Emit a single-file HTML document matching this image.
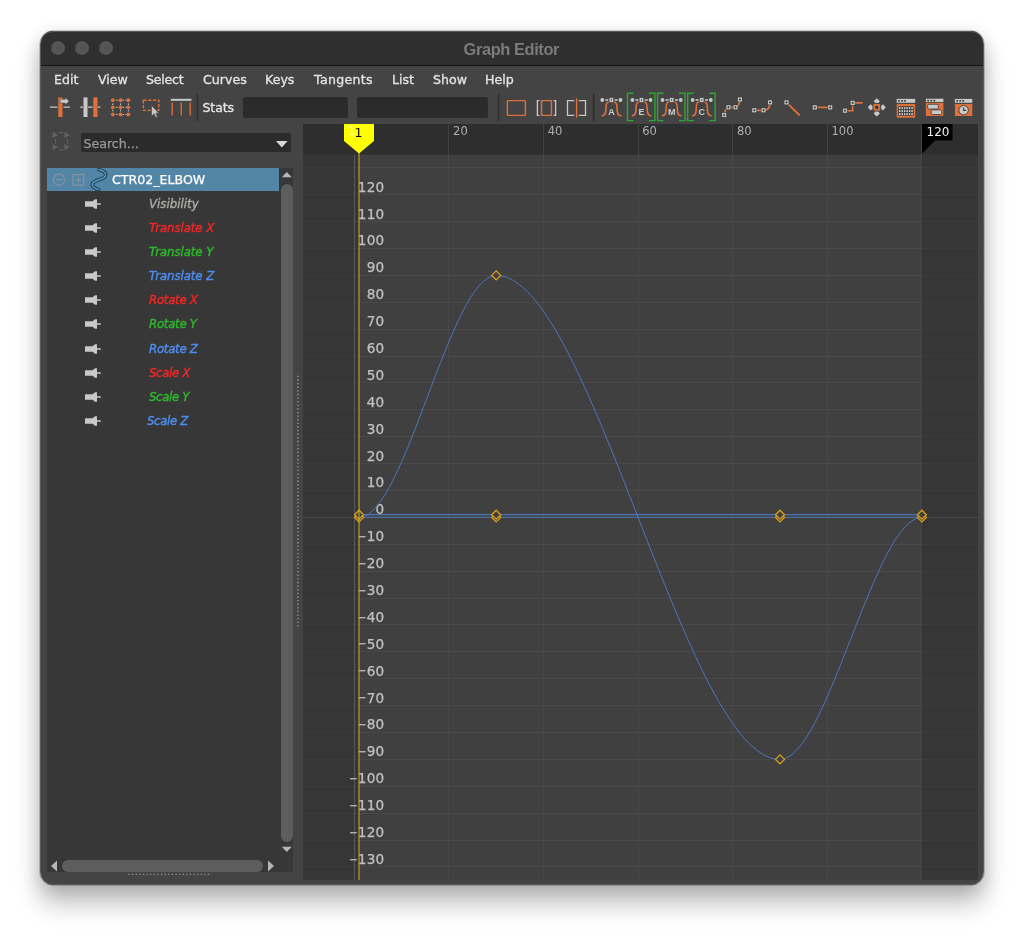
<!DOCTYPE html>
<html lang="en"><head><meta charset="utf-8"><title>Graph Editor</title>
<style>
*{box-sizing:border-box;margin:0;padding:0}
html,body{width:1024px;height:936px;overflow:hidden;background:#fff}
body{position:relative;font-family:"DejaVu Sans","Liberation Sans",sans-serif;font-size:12.4px;color:#ddd}
.win *{position:absolute}
.shadow{position:absolute;left:41px;top:31.500px;width:942px;height:853.500px;border-radius:12px;box-shadow:0 18px 26px 1px rgba(0,0,0,.24),0 4px 18px 1px rgba(0,0,0,.15)}
.win{will-change:transform;position:absolute;left:41px;top:31px;width:942px;height:854px;border-radius:12px;background:#444;overflow:hidden}
.titlebar{left:0;top:0;width:942px;height:34px;background:#2f2f2f}
.tbline{left:0;top:34px;width:942px;height:1px;background:#111}
.tl{width:14px;height:14px;border-radius:50%;background:#555;top:10px}
.title{left:0;width:942px;top:7.7px;text-align:center;font-family:"Liberation Sans",sans-serif;font-weight:bold;font-size:16.4px;color:#7b7b7b;letter-spacing:-.4px;line-height:20px;transform:translateX(-.7px)}
.menu span{-webkit-text-stroke:.3px #e4e4e4;top:38.8px;line-height:20px;color:#e4e4e4;font-size:12.6px;white-space:nowrap}
svg.graph{position:absolute;display:block}
svg text{font-family:"DejaVu Sans","Liberation Sans",sans-serif}
.rl text{font-size:11.5px;fill:#b0b0b0}
.rl120{font-size:12px;fill:#f2f2f2}
.vl text{font-size:13.6px;letter-spacing:.2px;fill:#c0c0c0;stroke:#c0c0c0;stroke-width:.25px;text-anchor:end}
.vl .mn{font-size:9.8px;letter-spacing:0;stroke-width:.4px}
.ct0{font-size:12.5px;fill:#ffffc8}
.ct1{font-size:12.5px;fill:#000}
svg.tb{position:absolute;display:block}
.tgl{font-family:"Liberation Sans",sans-serif;font-weight:bold;font-size:9px;fill:#cdcdcd;text-anchor:middle}
.stats{letter-spacing:-.15px;-webkit-text-stroke:.3px #e6e6e6;left:161.5px;top:66.5px;line-height:20px;font-size:12.6px;color:#e6e6e6}
.fld{background:#2b2b2b;border-radius:2.5px}
.search{left:40px;top:101.700px;width:210px;height:19.600px;background:#2b2b2b;border-radius:2px}
.search span{-webkit-text-stroke:.25px #9a9a9a;left:2.5px;top:1.500px;line-height:20px;font-size:12.6px;color:#9a9a9a}
.tree{left:5.700px;top:137px;width:246px;height:704px;background:#373737}
.selrow{left:5.700px;top:136.800px;width:232px;height:23.5px;background:#5285a6}
.hname{-webkit-text-stroke:.25px #fff;left:71px;top:138px;line-height:21px;font-size:12.6px;color:#fff;white-space:nowrap}
.ch{left:108px;line-height:20px;font-size:11.8px;font-style:italic;white-space:nowrap}
.vthumb{left:240.200px;top:152.500px;width:11.600px;height:658.500px;border-radius:6px;background:#5d5d5d}
.hthumb{left:21px;top:829px;width:201px;height:12px;border-radius:6px;background:#5d5d5d}
.rim{position:absolute;left:40px;top:30.600px;width:944px;height:854.600px;border-radius:13px;border:1.200px solid #5a5a5a;pointer-events:none;box-shadow:0 0 0 .5px rgba(0,0,0,.35)}

</style></head>
<body>
<div class="shadow"></div>
<div class="win">
<div class="titlebar"></div><div class="tbline"></div>
<div class="tl" style="left:10px"></div><div class="tl" style="left:34px"></div><div class="tl" style="left:58px"></div>
<div class="title">Graph Editor</div>
<div class="menu">
<span style="left:13px">Edit</span><span style="left:57px">View</span><span style="left:105px;letter-spacing:-.25px">Select</span><span style="left:162px">Curves</span><span style="left:224px">Keys</span><span style="left:273px;letter-spacing:.28px">Tangents</span><span style="left:351px">List</span><span style="left:392px">Show</span><span style="left:444px">Help</span>
</div>
<svg class="tb" style="left:0;top:57px" width="942" height="36" viewBox="41 88 942 36">
<path d="M50 107.2H57.5M63.5 107.2H70" stroke="#c8c8c8" stroke-width="1.2" fill="none"/>
<rect x="58.3" y="97.4" width="4.2" height="19.6" fill="#e0703a"/>
<path d="M60.2 99.3H65.2V97.6L69.2 101.2L65.2 104.8V103.1H60.2Z" fill="#c8c8c8" stroke="#444" stroke-width=".5"/>
<path d="M80.2 107.2H83M88 107.2H92.6M98 107.2H100.4" stroke="#c8c8c8" stroke-width="1.2" fill="none"/>
<rect x="83.5" y="97.4" width="4" height="19.6" fill="#c8c8c8"/>
<rect x="93.3" y="97.4" width="4.2" height="19.6" fill="#e0703a"/>
<g stroke="#c8c8c8" stroke-width="1" stroke-dasharray="1.6 1.6" fill="none">
<path d="M112.8 100.2V114.5"/>
<path d="M120.6 100.2V114.5"/>
<path d="M128.4 100.2V114.5"/>
<path d="M112.8 100.2H128.4"/>
<path d="M112.8 107.3H128.4"/>
<path d="M112.8 114.5H128.4"/>
</g>
<circle cx="112.8" cy="100.2" r="1.9" fill="#e0703a"/>
<circle cx="112.8" cy="107.3" r="1.9" fill="#e0703a"/>
<circle cx="112.8" cy="114.5" r="1.9" fill="#e0703a"/>
<circle cx="120.6" cy="100.2" r="1.9" fill="#e0703a"/>
<circle cx="120.6" cy="107.3" r="1.9" fill="#e0703a"/>
<circle cx="120.6" cy="114.5" r="1.9" fill="#e0703a"/>
<circle cx="128.4" cy="100.2" r="1.9" fill="#e0703a"/>
<circle cx="128.4" cy="107.3" r="1.9" fill="#e0703a"/>
<circle cx="128.4" cy="114.5" r="1.9" fill="#e0703a"/>
<rect x="143.4" y="100.2" width="15.4" height="10.2" fill="none" stroke="#e0703a" stroke-width="1.4" stroke-dasharray="3.2 1.6"/>
<path d="M151.6 105.4V116.2L154 113.8L155.8 117.6L157.4 116.8L155.7 113.2H158.8Z" fill="#c8c8c8" stroke="#444" stroke-width=".6"/>
<rect x="170.8" y="98.8" width="20.6" height="2" fill="#c8c8c8"/>
<path d="M172.2 102.4V115.4M181.2 102.4V115.4M190.2 102.4V115.4" stroke="#e0703a" stroke-width="1.3" fill="none"/>
<rect x="196.8" y="93.5" width="1.4" height="27.5" fill="#2c2c2c"/>
<rect x="497.8" y="93.5" width="1.4" height="27.5" fill="#2c2c2c"/>
<rect x="592.9" y="93.5" width="1.4" height="27.5" fill="#2c2c2c"/>
<rect x="507.4" y="100.6" width="18" height="14.8" fill="none" stroke="#e0703a" stroke-width="1.4" rx=".8"/>
<path d="M539.4 100.6H537.4V115.4H539.4M553.6 100.6H555.6V115.4H553.6" fill="none" stroke="#c8c8c8" stroke-width="1.3"/>
<rect x="541.5" y="100.6" width="10" height="14.8" fill="none" stroke="#e0703a" stroke-width="1.4" rx=".6"/>
<path d="M574.2 100.6H567.5V115.4H574.2M578.8 100.6H585.5V115.4H578.8" fill="none" stroke="#c8c8c8" stroke-width="1.3"/>
<path d="M576.6 98.3V117.7" stroke="#e0703a" stroke-width="1.4"/>
<path d="M605.3 100H608.3M614.7 100H617.7" stroke="#c8c8c8" stroke-width="1.3" fill="none"/><circle cx="602.3" cy="100" r="1.9" fill="#c8c8c8"/><circle cx="620.5" cy="100" r="1.9" fill="#c8c8c8"/><rect x="609.5" y="97.9" width="3.8" height="4.2" fill="#c8c8c8"/><rect x="610.9" y="98.9" width="1" height="2" fill="#555"/><path d="M602.3 115.8C606.1 115 605.7 112 605.9 109C606.1 105 605.9 102.6 608.0 102.3M614.8 102.3C617.1 102.600 616.9 105 617.1 109C617.3 112 616.9 115 620.7 115.8" fill="none" stroke="#e0703a" stroke-width="1.6" stroke-linecap="round"/><text x="611.5" y="115.2" class="tgl">A</text>
<path d="M633.5 93.3H627.5V120.6H633.5M648.9 93.3H654.9V120.6H648.9" fill="none" stroke="#2fa62f" stroke-width="1.4"/><path d="M635.4 100H638.4M644.8 100H647.8" stroke="#c8c8c8" stroke-width="1.3" fill="none"/><circle cx="632.4" cy="100" r="1.9" fill="#c8c8c8"/><circle cx="650.6" cy="100" r="1.9" fill="#c8c8c8"/><rect x="639.6" y="97.9" width="3.8" height="4.2" fill="#c8c8c8"/><rect x="641.0" y="98.9" width="1" height="2" fill="#555"/><path d="M632.4 115.8C636.2 115 635.8 112 636.0 109C636.2 105 636.0 102.6 638.1 102.3M644.9 102.3C647.2 102.600 647.0 105 647.2 109C647.4 112 647.0 115 650.8 115.8" fill="none" stroke="#e0703a" stroke-width="1.6" stroke-linecap="round"/><text x="641.6" y="115.2" class="tgl">E</text>
<path d="M663.6 93.3H657.6V120.6H663.6M679.0 93.3H685.0V120.6H679.0" fill="none" stroke="#2fa62f" stroke-width="1.4"/><path d="M665.5 100H668.5M674.9 100H677.9" stroke="#c8c8c8" stroke-width="1.3" fill="none"/><circle cx="662.5" cy="100" r="1.9" fill="#c8c8c8"/><circle cx="680.7" cy="100" r="1.9" fill="#c8c8c8"/><rect x="669.7" y="97.9" width="3.8" height="4.2" fill="#c8c8c8"/><rect x="671.1" y="98.9" width="1" height="2" fill="#555"/><path d="M662.5 115.8C666.3 115 665.9 112 666.1 109C666.3 105 666.1 102.6 668.2 102.3M675.0 102.3C677.3 102.600 677.1 105 677.3 109C677.5 112 677.1 115 680.9 115.8" fill="none" stroke="#e0703a" stroke-width="1.6" stroke-linecap="round"/><text x="671.7" y="115.2" class="tgl">M</text>
<path d="M693.7 93.3H687.7V120.6H693.7M709.1 93.3H715.1V120.6H709.1" fill="none" stroke="#2fa62f" stroke-width="1.4"/><path d="M695.6 100H698.6M705.0 100H708.0" stroke="#c8c8c8" stroke-width="1.3" fill="none"/><circle cx="692.6" cy="100" r="1.9" fill="#c8c8c8"/><circle cx="710.8" cy="100" r="1.9" fill="#c8c8c8"/><rect x="699.8" y="97.9" width="3.8" height="4.2" fill="#c8c8c8"/><rect x="701.2" y="98.9" width="1" height="2" fill="#555"/><path d="M692.6 115.8C696.4 115 696.0 112 696.2 109C696.4 105 696.2 102.6 698.3 102.3M705.1 102.3C707.4 102.600 707.2 105 707.4 109C707.6 112 707.2 115 711.0 115.8" fill="none" stroke="#e0703a" stroke-width="1.6" stroke-linecap="round"/><text x="701.8" y="115.2" class="tgl">C</text>
<path d="M724.3 115.1C724.800 110.500 726 108.500 728.400 107.300H735.600C738.400 106.600 739.600 103.600 740 99.400" fill="none" stroke="#e0703a" stroke-width="1.8"/>
<rect x="722.1" y="112.9" width="4.2" height="4.2" fill="#c8c8c8" stroke="#383838" stroke-width="1.1" paint-order="stroke"/><path d="M723.1 115.0H725.3M724.2 113.9V116.1" stroke="#333" stroke-width=".9" fill="none"/>
<rect x="726.4" y="105.2" width="4.2" height="4.2" fill="#c8c8c8" stroke="#383838" stroke-width="1.1" paint-order="stroke"/><path d="M727.4 107.3H729.6M728.5 106.2V108.4" stroke="#333" stroke-width=".9" fill="none"/>
<rect x="733.4" y="105.2" width="4.2" height="4.2" fill="#c8c8c8" stroke="#383838" stroke-width="1.1" paint-order="stroke"/><path d="M734.4 107.3H736.6M735.5 106.2V108.4" stroke="#333" stroke-width=".9" fill="none"/>
<rect x="737.8" y="97.4" width="4.2" height="4.2" fill="#c8c8c8" stroke="#383838" stroke-width="1.1" paint-order="stroke"/><path d="M738.8 99.5H741.0M739.9 98.4V100.6" stroke="#333" stroke-width=".9" fill="none"/>
<path d="M754.3 110.3H763.5C768 110.3 770 107.6 770 102.4" fill="none" stroke="#e0703a" stroke-width="1.8"/>
<rect x="752.2" y="108.2" width="4.2" height="4.2" fill="#c8c8c8" stroke="#383838" stroke-width="1.1" paint-order="stroke"/><path d="M753.2 110.3H755.4M754.3 109.2V111.4" stroke="#333" stroke-width=".9" fill="none"/>
<rect x="761.4" y="108.2" width="4.2" height="4.2" fill="#c8c8c8" stroke="#383838" stroke-width="1.1" paint-order="stroke"/><path d="M762.4 110.3H764.6M763.5 109.2V111.4" stroke="#333" stroke-width=".9" fill="none"/>
<rect x="767.9" y="100.3" width="4.2" height="4.2" fill="#c8c8c8" stroke="#383838" stroke-width="1.1" paint-order="stroke"/><path d="M768.9 102.4H771.1M770.0 101.3V103.5" stroke="#333" stroke-width=".9" fill="none"/>
<path d="M786.5 102.4L799.7 115.5" fill="none" stroke="#e0703a" stroke-width="1.8"/>
<rect x="784.4" y="100.3" width="4.2" height="4.2" fill="#c8c8c8" stroke="#383838" stroke-width="1.1" paint-order="stroke"/><path d="M785.4 102.4H787.6M786.5 101.3V103.5" stroke="#333" stroke-width=".9" fill="none"/>
<path d="M814.8 107.4H830.2" fill="none" stroke="#e0703a" stroke-width="1.6"/>
<rect x="812.7" y="105.3" width="4.2" height="4.2" fill="#c8c8c8" stroke="#383838" stroke-width="1.1" paint-order="stroke"/><path d="M813.7 107.4H815.9M814.8 106.3V108.5" stroke="#333" stroke-width=".9" fill="none"/>
<rect x="828.1" y="105.3" width="4.2" height="4.2" fill="#c8c8c8" stroke="#383838" stroke-width="1.1" paint-order="stroke"/><path d="M829.1 107.4H831.3M830.2 106.3V108.5" stroke="#333" stroke-width=".9" fill="none"/>
<path d="M845 110.7H852.7V102.9H862.6" fill="none" stroke="#e0703a" stroke-width="1.6"/>
<rect x="842.9" y="108.6" width="4.2" height="4.2" fill="#c8c8c8" stroke="#383838" stroke-width="1.1" paint-order="stroke"/><path d="M843.9 110.7H846.1M845.0 109.6V111.8" stroke="#333" stroke-width=".9" fill="none"/>
<rect x="850.6" y="100.8" width="4.2" height="4.2" fill="#c8c8c8" stroke="#383838" stroke-width="1.1" paint-order="stroke"/><path d="M851.6 102.9H853.8M852.7 101.8V104.0" stroke="#333" stroke-width=".9" fill="none"/>
<rect x="874.4" y="104.89999999999999" width="4.8" height="4.8" fill="#333" stroke="#e0703a" stroke-width="1.8"/>
<path d="M885.9 107.3L882.9 110.4L881.1 108.7L881.1 105.9L882.9 104.2ZM867.7 107.3L870.7 104.2L872.5 105.9L872.5 108.7L870.7 110.4ZM876.8 116.4L873.7 113.4L875.4 111.6L878.2 111.6L879.9 113.4ZM876.8 98.2L879.9 101.2L878.2 103.0L875.4 103.0L873.7 101.2Z" fill="#c8c8c8"/>
<rect x="896.7" y="98.9" width="18.5" height="3.9" fill="#c8c8c8"/><rect x="898.10" y="100.0" width="1.7" height="1.7" fill="#3c3c3c"/><rect x="901.15" y="100.0" width="1.7" height="1.7" fill="#3c3c3c"/><rect x="904.20" y="100.0" width="1.7" height="1.7" fill="#3c3c3c"/>
<rect x="896.7" y="104" width="18.5" height="13.8" rx="1" fill="#e0703a"/>
<rect x="898.2" y="106.3" width="15.4" height="9.5" rx=".6" fill="#3a3a3a"/>
<rect x="899.00" y="107.1" width="1.5" height="2" fill="#c8c8c8"/>
<rect x="901.46" y="107.1" width="1.5" height="2" fill="#c8c8c8"/>
<rect x="903.92" y="107.1" width="1.5" height="2" fill="#c8c8c8"/>
<rect x="906.38" y="107.1" width="1.5" height="2" fill="#c8c8c8"/>
<rect x="908.84" y="107.1" width="1.5" height="2" fill="#c8c8c8"/>
<rect x="911.30" y="107.1" width="1.5" height="2" fill="#c8c8c8"/>
<rect x="899.00" y="110.1" width="1.5" height="2" fill="#c8c8c8"/>
<rect x="901.46" y="110.1" width="1.5" height="2" fill="#c8c8c8"/>
<rect x="903.92" y="110.1" width="1.5" height="2" fill="#c8c8c8"/>
<rect x="906.38" y="110.1" width="1.5" height="2" fill="#c8c8c8"/>
<rect x="908.84" y="110.1" width="1.5" height="2" fill="#c8c8c8"/>
<rect x="911.30" y="110.1" width="1.5" height="2" fill="#c8c8c8"/>
<rect x="899.00" y="113.1" width="1.5" height="2" fill="#c8c8c8"/>
<rect x="901.46" y="113.1" width="1.5" height="2" fill="#c8c8c8"/>
<rect x="903.92" y="113.1" width="1.5" height="2" fill="#c8c8c8"/>
<rect x="906.38" y="113.1" width="1.5" height="2" fill="#c8c8c8"/>
<rect x="908.84" y="113.1" width="1.5" height="2" fill="#c8c8c8"/>
<rect x="911.30" y="113.1" width="1.5" height="2" fill="#c8c8c8"/>
<rect x="925.9" y="98.7" width="17.5" height="3.3" fill="#c8c8c8"/><rect x="927.30" y="99.8" width="1.7" height="1.7" fill="#3c3c3c"/><rect x="930.35" y="99.8" width="1.7" height="1.7" fill="#3c3c3c"/><rect x="933.40" y="99.8" width="1.7" height="1.7" fill="#3c3c3c"/>
<rect x="925.9" y="102.8" width="17.5" height="13.2" fill="#e0703a"/>
<rect x="927.6" y="104.3" width="10.7" height="4.7" rx="1.2" fill="#c8c8c8" stroke="#3a3a3a" stroke-width=".8"/><rect x="931.2" y="109.9" width="10.6" height="4.7" rx="1.2" fill="#c8c8c8" stroke="#3a3a3a" stroke-width=".8"/>
<rect x="954.9" y="98.9" width="17.4" height="3.9" fill="#c8c8c8"/><rect x="956.30" y="100.0" width="1.7" height="1.7" fill="#3c3c3c"/><rect x="959.35" y="100.0" width="1.7" height="1.7" fill="#3c3c3c"/><rect x="962.40" y="100.0" width="1.7" height="1.7" fill="#3c3c3c"/>
<rect x="954.9" y="104" width="17.4" height="12" fill="#e0703a"/>
<circle cx="963.6" cy="110.2" r="4.7" fill="#c8c8c8" stroke="#3a3a3a" stroke-width=".9"/><path d="M963.6 107.4V110.4H966" fill="none" stroke="#3a3a3a" stroke-width="1.1"/>
</svg>
<div class="stats">Stats</div>
<div class="fld" style="left:202px;top:66px;width:105px;height:21px"></div>
<div class="fld" style="left:315.5px;top:66px;width:131.5px;height:21px"></div>
<svg style="left:11px;top:100px" width="20" height="22" viewBox="52 131 20 22"><g fill="none" stroke="#616161" stroke-width="1.200"><path d="M59 132.700H63.500M59 150H63.500M55.500 139V143.500M67.500 139V143.500"/></g><path d="M52.600 131.800l5.600 3.100-5.600 3.100zM64.400 131.800l5.600 3.100-5.600 3.100zM52.600 144l5.600 3.100-5.600 3.100zM64.400 144l5.600 3.100-5.600 3.100z" fill="#616161"/></svg>
<div class="search"><span>Search...</span></div>
<svg style="left:234px;top:108.600px" width="14" height="9" viewBox="0 0 14 9"><path d="M1 1H12.600L6.800 7.600Z" fill="#d8d8d8"/></svg>
<div class="tree"></div>
<div class="selrow"></div>
<svg style="left:5px;top:136px" width="64" height="26" viewBox="46 167 64 26"><circle cx="59" cy="179.700" r="5.600" fill="none" stroke="#8494a0" stroke-width="1.200"/><path d="M55.600 179.700H62.400" stroke="#8494a0" stroke-width="1.200"/><rect x="72.900" y="174.600" width="10.800" height="10.600" fill="none" stroke="#8a949c" stroke-width="1.200"/><path d="M75.200 179.900H81.400M78.300 176.800V183" stroke="#8a949c" stroke-width="1.200"/><path d="M99 169.800C103 170.500 106.200 172.400 105.600 175.600C104.800 179.600 93 180 92.300 184C91.800 186.700 95 188.500 98.600 189.600" fill="none" stroke="#2c3f4c" stroke-width="3.600" stroke-linecap="round"/><path d="M99 169.800C103 170.500 106.200 172.400 105.600 175.600C104.800 179.600 93 180 92.300 184C91.800 186.700 95 188.500 98.600 189.600" fill="none" stroke="#4c9ccb" stroke-width="1.500" stroke-linecap="round"/></svg>
<div class="hname">CTR02_ELBOW</div>
<svg style="left:43px;top:166.0px" width="18" height="14" viewBox="84 -7 18 14"><path d="M85 -2.800H92.600L95 -4.800H97V-0.700H100.800V0.700H97V4.800H95L92.600 2.800H85Z" fill="#c8c8c8"/></svg>
<div class="ch" style="top:163.0px;color:#a9ada6;-webkit-text-stroke:.38px #a9ada6;letter-spacing:0">Visibility</div>
<svg style="left:43px;top:190.1px" width="18" height="14" viewBox="84 -7 18 14"><path d="M85 -2.800H92.600L95 -4.800H97V-0.700H100.800V0.700H97V4.800H95L92.600 2.800H85Z" fill="#c8c8c8"/></svg>
<div class="ch" style="top:187.1px;color:#f42626;-webkit-text-stroke:.38px #f42626;letter-spacing:-.1px">Translate X</div>
<svg style="left:43px;top:214.2px" width="18" height="14" viewBox="84 -7 18 14"><path d="M85 -2.800H92.600L95 -4.800H97V-0.700H100.800V0.700H97V4.800H95L92.600 2.800H85Z" fill="#c8c8c8"/></svg>
<div class="ch" style="top:211.2px;color:#2eb82e;-webkit-text-stroke:.38px #2eb82e;letter-spacing:-.1px">Translate Y</div>
<svg style="left:43px;top:238.2px" width="18" height="14" viewBox="84 -7 18 14"><path d="M85 -2.800H92.600L95 -4.800H97V-0.700H100.800V0.700H97V4.800H95L92.600 2.800H85Z" fill="#c8c8c8"/></svg>
<div class="ch" style="top:235.2px;color:#4d8df0;-webkit-text-stroke:.38px #4d8df0;letter-spacing:-.1px">Translate Z</div>
<svg style="left:43px;top:262.3px" width="18" height="14" viewBox="84 -7 18 14"><path d="M85 -2.800H92.600L95 -4.800H97V-0.700H100.800V0.700H97V4.800H95L92.600 2.800H85Z" fill="#c8c8c8"/></svg>
<div class="ch" style="top:259.3px;color:#f42626;-webkit-text-stroke:.38px #f42626;letter-spacing:-.3px">Rotate X</div>
<svg style="left:43px;top:286.4px" width="18" height="14" viewBox="84 -7 18 14"><path d="M85 -2.800H92.600L95 -4.800H97V-0.700H100.800V0.700H97V4.800H95L92.600 2.800H85Z" fill="#c8c8c8"/></svg>
<div class="ch" style="top:283.4px;color:#2eb82e;-webkit-text-stroke:.38px #2eb82e;letter-spacing:-.3px">Rotate Y</div>
<svg style="left:43px;top:310.5px" width="18" height="14" viewBox="84 -7 18 14"><path d="M85 -2.800H92.600L95 -4.800H97V-0.700H100.800V0.700H97V4.800H95L92.600 2.800H85Z" fill="#c8c8c8"/></svg>
<div class="ch" style="top:307.5px;color:#4d8df0;-webkit-text-stroke:.38px #4d8df0;letter-spacing:-.3px">Rotate Z</div>
<svg style="left:43px;top:334.6px" width="18" height="14" viewBox="84 -7 18 14"><path d="M85 -2.800H92.600L95 -4.800H97V-0.700H100.800V0.700H97V4.800H95L92.600 2.800H85Z" fill="#c8c8c8"/></svg>
<div class="ch" style="top:331.6px;color:#f42626;-webkit-text-stroke:.38px #f42626;letter-spacing:-.38px">Scale X</div>
<svg style="left:43px;top:358.6px" width="18" height="14" viewBox="84 -7 18 14"><path d="M85 -2.800H92.600L95 -4.800H97V-0.700H100.800V0.700H97V4.800H95L92.600 2.800H85Z" fill="#c8c8c8"/></svg>
<div class="ch" style="top:355.6px;color:#2eb82e;-webkit-text-stroke:.38px #2eb82e;letter-spacing:-.38px">Scale Y</div>
<svg style="left:43px;top:382.7px" width="18" height="14" viewBox="84 -7 18 14"><path d="M85 -2.800H92.600L95 -4.800H97V-0.700H100.800V0.700H97V4.800H95L92.600 2.800H85Z" fill="#c8c8c8"/></svg>
<div class="ch" style="top:379.7px; left:106px;color:#4d8df0;-webkit-text-stroke:.38px #4d8df0;letter-spacing:-.38px">Scale Z</div>
<svg style="left:240px;top:140px" width="14" height="8" viewBox="0 0 14 8"><path d="M.800 6.200L5.800 1.100L10.800 6.200Z" fill="#b6b6b6"/></svg>
<div class="vthumb"></div>
<svg style="left:240px;top:814px" width="14" height="8" viewBox="0 0 14 8"><path d="M.800 1.800L5.800 6.900L10.800 1.800Z" fill="#b6b6b6"/></svg>
<svg style="left:9px;top:828px" width="8" height="14" viewBox="0 0 8 14"><path d="M7 1.500L1 7L7 12.500Z" fill="#b6b6b6"/></svg>
<div class="hthumb"></div>
<svg style="left:226px;top:828px" width="8" height="14" viewBox="0 0 8 14"><path d="M1 1.500L7 7L1 12.500Z" fill="#b6b6b6"/></svg>
<svg style="left:86px;top:842px" width="86" height="3" viewBox="127 873 86 3"><path d="M128.350 874.450H209.500" fill="none" stroke="#959595" stroke-width="1.300" stroke-dasharray="1.300 2.318"/></svg>
<svg style="left:255px;top:343px" width="4" height="256" viewBox="296 374 4 256"><path d="M297.900 375.750V626.700" fill="none" stroke="#959595" stroke-width="1.500" stroke-dasharray="1.300 2.316"/></svg>
<svg class="graph" style="left:262px;top:93px" width="675" height="756" viewBox="303 124 675 756">
<rect x="303" y="124" width="675" height="756" fill="#404040"/>
<line x1="303" x2="978" y1="866.5" y2="866.5" stroke="#484848" stroke-width="1"/>
<line x1="303" x2="978" y1="840.5" y2="840.5" stroke="#484848" stroke-width="1"/>
<line x1="303" x2="978" y1="813.5" y2="813.5" stroke="#484848" stroke-width="1"/>
<line x1="303" x2="978" y1="786.5" y2="786.5" stroke="#484848" stroke-width="1"/>
<line x1="303" x2="978" y1="759.5" y2="759.5" stroke="#484848" stroke-width="1"/>
<line x1="303" x2="978" y1="732.5" y2="732.5" stroke="#484848" stroke-width="1"/>
<line x1="303" x2="978" y1="705.5" y2="705.5" stroke="#484848" stroke-width="1"/>
<line x1="303" x2="978" y1="678.5" y2="678.5" stroke="#484848" stroke-width="1"/>
<line x1="303" x2="978" y1="651.5" y2="651.5" stroke="#484848" stroke-width="1"/>
<line x1="303" x2="978" y1="624.5" y2="624.5" stroke="#484848" stroke-width="1"/>
<line x1="303" x2="978" y1="598.5" y2="598.5" stroke="#484848" stroke-width="1"/>
<line x1="303" x2="978" y1="571.5" y2="571.5" stroke="#484848" stroke-width="1"/>
<line x1="303" x2="978" y1="544.5" y2="544.5" stroke="#484848" stroke-width="1"/>
<line x1="303" x2="978" y1="517.5" y2="517.5" stroke="#565656" stroke-width="1"/>
<line x1="303" x2="978" y1="490.5" y2="490.5" stroke="#484848" stroke-width="1"/>
<line x1="303" x2="978" y1="463.5" y2="463.5" stroke="#484848" stroke-width="1"/>
<line x1="303" x2="978" y1="436.5" y2="436.5" stroke="#484848" stroke-width="1"/>
<line x1="303" x2="978" y1="409.5" y2="409.5" stroke="#484848" stroke-width="1"/>
<line x1="303" x2="978" y1="382.5" y2="382.5" stroke="#484848" stroke-width="1"/>
<line x1="303" x2="978" y1="356.5" y2="356.5" stroke="#484848" stroke-width="1"/>
<line x1="303" x2="978" y1="329.5" y2="329.5" stroke="#484848" stroke-width="1"/>
<line x1="303" x2="978" y1="302.5" y2="302.5" stroke="#484848" stroke-width="1"/>
<line x1="303" x2="978" y1="275.5" y2="275.5" stroke="#484848" stroke-width="1"/>
<line x1="303" x2="978" y1="248.5" y2="248.5" stroke="#484848" stroke-width="1"/>
<line x1="303" x2="978" y1="221.5" y2="221.5" stroke="#484848" stroke-width="1"/>
<line x1="303" x2="978" y1="194.5" y2="194.5" stroke="#484848" stroke-width="1"/>
<line x1="303" x2="978" y1="167.5" y2="167.5" stroke="#484848" stroke-width="1"/>
<line x1="354.5" x2="354.5" y1="154.7" y2="880" stroke="#6a6a6a" stroke-width="1"/>
<line x1="448.5" x2="448.5" y1="124" y2="880" stroke="#484848" stroke-width="1"/>
<line x1="543.5" x2="543.5" y1="124" y2="880" stroke="#484848" stroke-width="1"/>
<line x1="638.5" x2="638.5" y1="124" y2="880" stroke="#484848" stroke-width="1"/>
<line x1="732.5" x2="732.5" y1="124" y2="880" stroke="#484848" stroke-width="1"/>
<line x1="827.5" x2="827.5" y1="124" y2="880" stroke="#484848" stroke-width="1"/>
<line x1="921.5" x2="921.5" y1="124" y2="880" stroke="#484848" stroke-width="1"/>
<rect x="303" y="154.7" width="56.0" height="725.3" fill="#000" fill-opacity=".155"/>
<rect x="921.9" y="154.7" width="56.1" height="725.3" fill="#000" fill-opacity=".155"/>
<rect x="303" y="124" width="675" height="30.69999999999999" fill="#2e2e2e"/>
<line x1="448.5" x2="448.5" y1="124" y2="154.7" stroke="#424242" stroke-width="1"/>
<line x1="543.5" x2="543.5" y1="124" y2="154.7" stroke="#424242" stroke-width="1"/>
<line x1="638.5" x2="638.5" y1="124" y2="154.7" stroke="#424242" stroke-width="1"/>
<line x1="732.5" x2="732.5" y1="124" y2="154.7" stroke="#424242" stroke-width="1"/>
<line x1="827.5" x2="827.5" y1="124" y2="154.7" stroke="#424242" stroke-width="1"/>
<line x1="921.5" x2="921.5" y1="124" y2="154.7" stroke="#424242" stroke-width="1"/>
<g class="rl">
<text x="453.1" y="135.2">20</text>
<text x="547.7" y="135.2">40</text>
<text x="642.3" y="135.2">60</text>
<text x="736.9" y="135.2">80</text>
<text x="831.5" y="135.2">100</text>
</g>
<path d="M922 124H952.5V140.5H935L922 153.5Z" fill="#000"/>
<text class="rl120" x="926.6" y="135.5">120</text>
<g class="vl">
<text x="384.4" y="191.6">120</text>
<text x="384.4" y="218.5">110</text>
<text x="384.4" y="245.4">100</text>
<text x="384.4" y="272.3">90</text>
<text x="384.4" y="299.2">80</text>
<text x="384.4" y="326.1">70</text>
<text x="384.4" y="353.0">60</text>
<text x="384.4" y="379.8">50</text>
<text x="384.4" y="406.7">40</text>
<text x="384.4" y="433.6">30</text>
<text x="384.4" y="460.5">20</text>
<text x="384.4" y="487.4">10</text>
<text x="384.4" y="514.3">0</text>
<text x="384.4" y="541.2"><tspan class="mn" dy="-1.25">−</tspan><tspan dx=".4" dy="1.25">10</tspan></text>
<text x="384.4" y="568.1"><tspan class="mn" dy="-1.25">−</tspan><tspan dx=".4" dy="1.25">20</tspan></text>
<text x="384.4" y="595.0"><tspan class="mn" dy="-1.25">−</tspan><tspan dx=".4" dy="1.25">30</tspan></text>
<text x="384.4" y="621.9"><tspan class="mn" dy="-1.25">−</tspan><tspan dx=".4" dy="1.25">40</tspan></text>
<text x="384.4" y="648.7"><tspan class="mn" dy="-1.25">−</tspan><tspan dx=".4" dy="1.25">50</tspan></text>
<text x="384.4" y="675.6"><tspan class="mn" dy="-1.25">−</tspan><tspan dx=".4" dy="1.25">60</tspan></text>
<text x="384.4" y="702.5"><tspan class="mn" dy="-1.25">−</tspan><tspan dx=".4" dy="1.25">70</tspan></text>
<text x="384.4" y="729.4"><tspan class="mn" dy="-1.25">−</tspan><tspan dx=".4" dy="1.25">80</tspan></text>
<text x="384.4" y="756.3"><tspan class="mn" dy="-1.25">−</tspan><tspan dx=".4" dy="1.25">90</tspan></text>
<text x="384.4" y="783.2"><tspan class="mn" dy="-1.25">−</tspan><tspan dx=".4" dy="1.25">100</tspan></text>
<text x="384.4" y="810.1"><tspan class="mn" dy="-1.25">−</tspan><tspan dx=".4" dy="1.25">110</tspan></text>
<text x="384.4" y="837.0"><tspan class="mn" dy="-1.25">−</tspan><tspan dx=".4" dy="1.25">120</tspan></text>
<text x="384.4" y="863.9"><tspan class="mn" dy="-1.25">−</tspan><tspan dx=".4" dy="1.25">130</tspan></text>
</g>
<g fill="none" stroke="#4a76b8" stroke-width="1">
<path d="M359.03 517.40C404.75 517.40 450.48 275.39 496.20 275.39C590.80 275.39 685.40 759.41 780.00 759.41C827.30 759.41 874.60 517.40 921.90 517.40"/>
<line x1="359.0" x2="921.9" y1="514.7" y2="514.7" stroke-width="1.25"/>
<line x1="359.0" x2="921.9" y1="517.4" y2="517.4" stroke-width="1.25" stroke-opacity=".75"/>
</g>
<g fill="#404040" stroke="#e0a01c" stroke-width="1.25">
<path d="M354.5 517.4L359.0 512.9L363.5 517.4L359.0 521.9Z"/>
<path d="M354.5 514.7L359.0 510.2L363.5 514.7L359.0 519.2Z" fill="#404040"/>
<path d="M491.7 517.4L496.2 512.9L500.7 517.4L496.2 521.9Z"/>
<path d="M491.7 514.7L496.2 510.2L500.7 514.7L496.2 519.2Z" fill="#404040"/>
<path d="M775.5 517.4L780.0 512.9L784.5 517.4L780.0 521.9Z"/>
<path d="M775.5 514.7L780.0 510.2L784.5 514.7L780.0 519.2Z" fill="#404040"/>
<path d="M917.4 517.4L921.9 512.9L926.4 517.4L921.9 521.9Z"/>
<path d="M917.4 514.7L921.9 510.2L926.4 514.7L921.9 519.2Z" fill="#404040"/>
<path d="M491.7 275.4L496.2 270.9L500.7 275.4L496.2 279.9Z"/>
<path d="M775.5 759.4L780.0 754.9L784.5 759.4L780.0 763.9Z"/>
</g>
<line x1="359.0" x2="359.0" y1="152.7" y2="880" stroke="#c4b61a" stroke-width="1"/>
<path d="M344.0 124H374.0V141L359.0 153.5L344.0 141Z" fill="#ffff00"/>
<text class="ct0" x="347.4" y="135">1</text>
<text class="ct1" x="354.4" y="136.5">1</text>
</svg>
</div>
<div class="rim"></div>

</body></html>
